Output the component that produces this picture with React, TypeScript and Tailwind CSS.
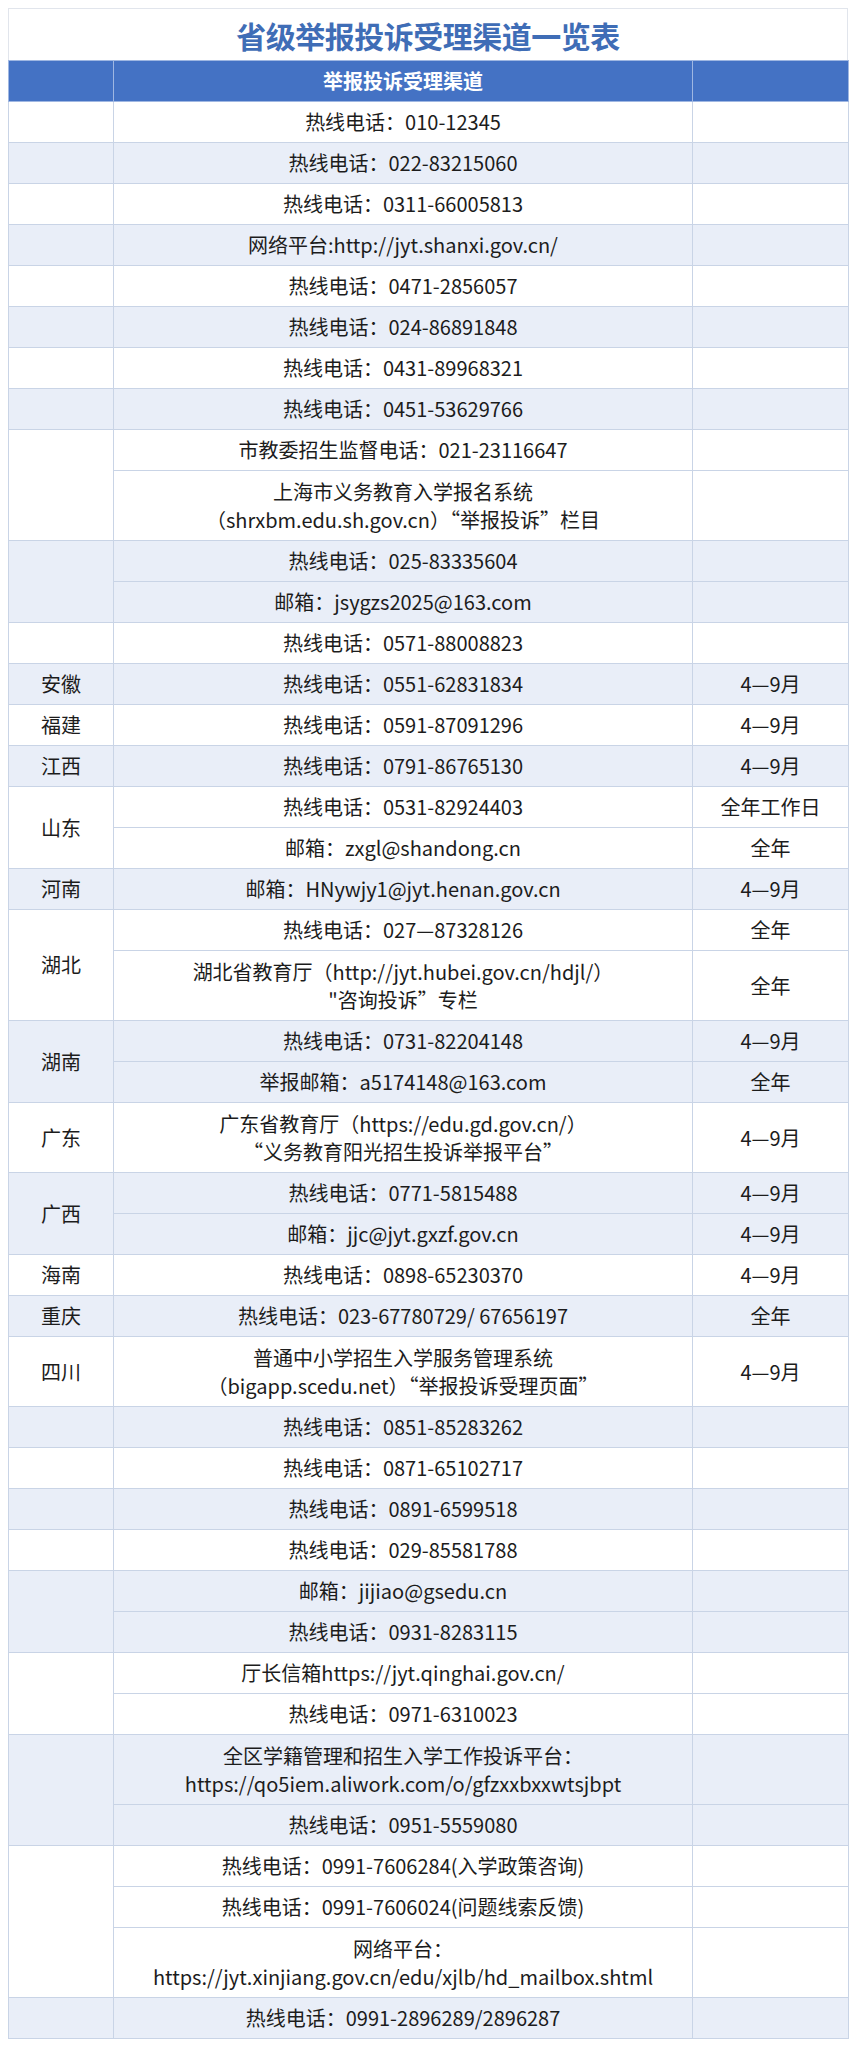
import React from 'react';

type Sub = { lines: string[]; period?: string; tall?: boolean };
type Group = { prov: string; blue: boolean; subs: Sub[] };

const g = (prov: string, blue: boolean, subs: Sub[]): Group => ({ prov, blue, subs });
const s = (text: string, period?: string): Sub => ({ lines: [text], period });
const t = (a: string, b: string, period?: string): Sub => ({ lines: [a, b], period, tall: true });

const groups: Group[] = [
  g('', false, [s('热线电话：010-12345')]),
  g('', true, [s('热线电话：022-83215060')]),
  g('', false, [s('热线电话：0311-66005813')]),
  g('', true, [s('网络平台:http://jyt.shanxi.gov.cn/')]),
  g('', false, [s('热线电话：0471-2856057')]),
  g('', true, [s('热线电话：024-86891848')]),
  g('', false, [s('热线电话：0431-89968321')]),
  g('', true, [s('热线电话：0451-53629766')]),
  g('', false, [
    s('市教委招生监督电话：021-23116647'),
    t('上海市义务教育入学报名系统', '（shrxbm.edu.sh.gov.cn）“举报投诉”栏目'),
  ]),
  g('', true, [s('热线电话：025-83335604'), s('邮箱：jsygzs2025@163.com')]),
  g('', false, [s('热线电话：0571-88008823')]),
  g('安徽', true, [s('热线电话：0551-62831834', '4—9月')]),
  g('福建', false, [s('热线电话：0591-87091296', '4—9月')]),
  g('江西', true, [s('热线电话：0791-86765130', '4—9月')]),
  g('山东', false, [s('热线电话：0531-82924403', '全年工作日'), s('邮箱：zxgl@shandong.cn', '全年')]),
  g('河南', true, [s('邮箱：HNywjy1@jyt.henan.gov.cn', '4—9月')]),
  g('湖北', false, [
    s('热线电话：027—87328126', '全年'),
    t('湖北省教育厅（http://jyt.hubei.gov.cn/hdjl/）', '"咨询投诉”专栏', '全年'),
  ]),
  g('湖南', true, [s('热线电话：0731-82204148', '4—9月'), s('举报邮箱：a5174148@163.com', '全年')]),
  g('广东', false, [t('广东省教育厅（https://edu.gd.gov.cn/）', '“义务教育阳光招生投诉举报平台”', '4—9月')]),
  g('广西', true, [s('热线电话：0771-5815488', '4—9月'), s('邮箱：jjc@jyt.gxzf.gov.cn', '4—9月')]),
  g('海南', false, [s('热线电话：0898-65230370', '4—9月')]),
  g('重庆', true, [s('热线电话：023-67780729/ 67656197', '全年')]),
  g('四川', false, [t('普通中小学招生入学服务管理系统', '（bigapp.scedu.net）“举报投诉受理页面”', '4—9月')]),
  g('', true, [s('热线电话：0851-85283262')]),
  g('', false, [s('热线电话：0871-65102717')]),
  g('', true, [s('热线电话：0891-6599518')]),
  g('', false, [s('热线电话：029-85581788')]),
  g('', true, [s('邮箱：jijiao@gsedu.cn'), s('热线电话：0931-8283115')]),
  g('', false, [s('厅长信箱https://jyt.qinghai.gov.cn/'), s('热线电话：0971-6310023')]),
  g('', true, [
    t('全区学籍管理和招生入学工作投诉平台：', 'https://qo5iem.aliwork.com/o/gfzxxbxxwtsjbpt'),
    s('热线电话：0951-5559080'),
  ]),
  g('', false, [
    s('热线电话：0991-7606284(入学政策咨询)'),
    s('热线电话：0991-7606024(问题线索反馈)'),
    t('网络平台：', 'https://jyt.xinjiang.gov.cn/edu/xjlb/hd_mailbox.shtml'),
  ]),
  g('', true, [s('热线电话：0991-2896289/2896287')]),
];

const cell = 'border border-[#c9d4e6] text-center align-middle p-0';

export default function App() {
  return (
    <div
      className="bg-white min-h-[2048px] pt-2 pl-2"
      style={{ fontFamily: '"Noto Sans CJK SC", "Noto Sans", sans-serif' }}
    >
      <div className="w-[840px]">
        <div className="h-[52px] flex items-center justify-center border border-b-0 border-[#e1e5ec]">
          <h1 className="text-[30px] font-bold text-[#3f6db6] leading-none tracking-[-0.5px]">
            省级举报投诉受理渠道一览表
          </h1>
        </div>
        <table className="w-full table-fixed border-collapse border border-[#9eadc4] text-[20px] text-[#1c1c1c]">
          <colgroup>
            <col className="w-[105px]" />
            <col className="w-[579px]" />
            <col className="w-[156px]" />
          </colgroup>
          <thead>
            <tr className="h-[41px] bg-[#4472c4]">
              <th className="border border-[#9fb7e2] p-0"></th>
              <th className="border border-[#9fb7e2] p-0 text-white font-bold text-[20px]">
                举报投诉受理渠道
              </th>
              <th className="border border-[#9fb7e2] p-0"></th>
            </tr>
          </thead>
          <tbody>
            {groups.map((grp, gi) =>
              grp.subs.map((sub, si) => (
                <tr
                  key={`${gi}-${si}`}
                  className={`${sub.tall ? 'h-[70px]' : 'h-[41px]'} ${grp.blue ? 'bg-[#e9eef8]' : 'bg-white'}`}
                >
                  {si === 0 && (
                    <td className={cell} rowSpan={grp.subs.length}>
                      {grp.prov}
                    </td>
                  )}
                  <td className={`${cell} leading-[28px]`}>
                    {sub.lines.map((ln, li) => (
                      <div key={li}>{ln}</div>
                    ))}
                  </td>
                  <td className={cell}>{sub.period ?? ''}</td>
                </tr>
              ))
            )}
          </tbody>
        </table>
      </div>
    </div>
  );
}
